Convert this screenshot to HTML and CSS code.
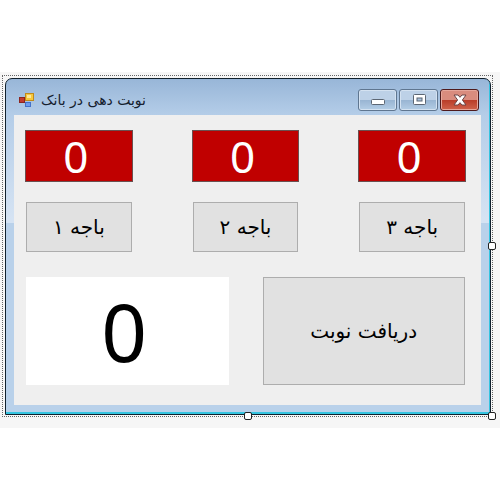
FILE: index.html
```html
<!DOCTYPE html>
<html lang="fa">
<head>
  <meta charset="UTF-8" />
  <meta name="viewport" content="width=device-width, initial-scale=1.0"/>
  <title>نوبت دهی در بانک</title>
  <link rel="stylesheet" href="styles.css">
</head>
<body>

  <div class="designer">
    <div class="selection">
      <div class="window">
        <div class="title-bar">
          <svg class="app-icon" width="16" height="16" viewBox="0 0 16 16">
            <rect x="0.5" y="5.5" width="5" height="5" fill="#c23a2e" stroke="#8c2620"/>
            <rect x="6.5" y="1.5" width="8" height="7" fill="#f6c83c" stroke="#c08a1c"/>
            <rect x="8" y="3" width="4" height="3" fill="#fde898"/>
            <rect x="6.5" y="10.5" width="5" height="4" fill="#6d9cf0" stroke="#4472c8"/>
          </svg>
          <h1 class="title" dir="rtl">نوبت دهی در بانک</h1>
          <div class="window-buttons">
            <button type="button" class="window-btn" aria-label="Minimize">
              <svg width="16" height="12" viewBox="0 0 16 12">
                <rect x="1.5" y="5.5" width="13" height="5" rx="1" fill="#fff" stroke="#5c6673"/>
              </svg>
            </button>
            <button type="button" class="window-btn" aria-label="Maximize">
              <svg width="16" height="12" viewBox="0 0 16 12">
                <rect x="2.5" y="0.5" width="12" height="10" rx="1" fill="#fff" stroke="#5c6673"/>
                <rect x="6" y="4" width="5" height="3" fill="#a9c3df" stroke="#5c6673"/>
              </svg>
            </button>
            <button type="button" class="window-btn close" aria-label="Close">
              <svg width="16" height="12" viewBox="0 0 16 12">
                <path d="M2 1h4l2 2.3L10 1h4L10.4 6l3.6 5h-4L8 8.7 6 11H2l3.6-5z" fill="#fff" stroke="#6b4545"/>
              </svg>
            </button>
          </div>
        </div>

        <div class="client">
          <div class="counters">
            <output class="counter">0</output>
            <output class="counter">0</output>
            <output class="counter">0</output>
            <button type="button" class="btn" dir="rtl">باجه ۱</button>
            <button type="button" class="btn" dir="rtl">باجه ۲</button>
            <button type="button" class="btn" dir="rtl">باجه ۳</button>
          </div>
          <div class="ticket">
            <output class="ticket-number">0</output>
            <button type="button" class="btn" dir="rtl">دریافت نوبت</button>
          </div>
        </div>
      </div>

      <span class="handle handle-right"></span>
      <span class="handle handle-bottom"></span>
      <span class="handle handle-corner"></span>
    </div>
  </div>

</body>
</html>
```

FILE: styles.css
```css
body {
  margin: 0;
  padding-top: 72px;
  background: #fff;
  font-family: "DejaVu Sans", sans-serif;
}

.designer {
  background: #f6f6f6;
  padding: 3px 7px 11px 2px;
}

.selection {
  position: relative;
  border: 1px dotted #666;
  padding: 2px 1px 1px 2px;
}

.window {
  border: 1px solid #10202c;
  border-radius: 7px 7px 0 0;
  box-shadow: inset -1px -2px 0 #35c4e0;
  padding: 0 9px 9px 8px;
  background: linear-gradient(#98b6d8 0, #b4cde8 36px, #d5e3f3 140px, #d5e3f3 144px, #b9d1ea 144px);
}

.title-bar {
  display: flex;
  align-items: center;
  height: 36px;
  padding: 6px 2px 0 5px;
  box-sizing: border-box;
}

.title {
  margin: 0 0 0 6px;
  font-size: 14px;
  font-weight: normal;
  color: #15202e;
}

.window-buttons {
  display: flex;
  gap: 2px;
  margin-left: auto;
}

.window-btn {
  display: flex;
  align-items: center;
  justify-content: center;
  width: 39px;
  height: 22px;
  padding: 0;
  border: 1px solid #5f7690;
  border-radius: 3px;
  box-shadow: inset 0 0 0 1px #d4e2f1;
  background: linear-gradient(#bdd1e7 50%, #98b4d2 50%, #b4cee6);
}

.window-btn.close {
  border-color: #4e1a1c;
  box-shadow: inset 0 0 0 1px #e6a79b;
  background: linear-gradient(#d98c7e 50%, #b93c28 50%, #d0644c);
}

.client {
  background: #efefef;
  padding: 15px 15px 20px 11px;
}

.counters {
  display: grid;
  grid-template-columns: repeat(3, 1fr);
  column-gap: 59px;
  row-gap: 20px;
}

.counter,
.ticket-number {
  display: flex;
  align-items: center;
  justify-content: center;
  padding-right: 6px;
  box-sizing: border-box;
  font-family: "Noto Sans", sans-serif;
}

.counter {
  height: 52px;
  border: 1px solid #6a5050;
  background: #c00000;
  color: #fff;
  font-size: 44px;
  line-height: 50px;
}

.btn {
  padding: 0;
  border: 1px solid #adadad;
  background: #e1e1e1;
  color: #000;
  font-family: "DejaVu Sans", sans-serif;
  font-size: 20px;
}

.counters .btn {
  height: 50px;
  margin: 0 1px;
}

.ticket {
  display: grid;
  grid-template-columns: 1fr 1fr;
  column-gap: 34px;
  height: 108px;
  margin: 25px 1px 0;
}

.ticket-number {
  background: #fff;
  color: #000;
  font-size: 80px;
  line-height: 108px;
}

/* resize handles */
.handle {
  position: absolute;
  width: 8px;
  height: 8px;
  box-sizing: border-box;
  border: 1px solid #222;
  border-radius: 2px;
  background: #fff;
}

.handle-right {
  top: 50%;
  right: -4px;
  margin-top: -4px;
}

.handle-bottom {
  bottom: -4px;
  left: 50%;
  margin-left: -4px;
}

.handle-corner {
  right: -4px;
  bottom: -4px;
}
```
